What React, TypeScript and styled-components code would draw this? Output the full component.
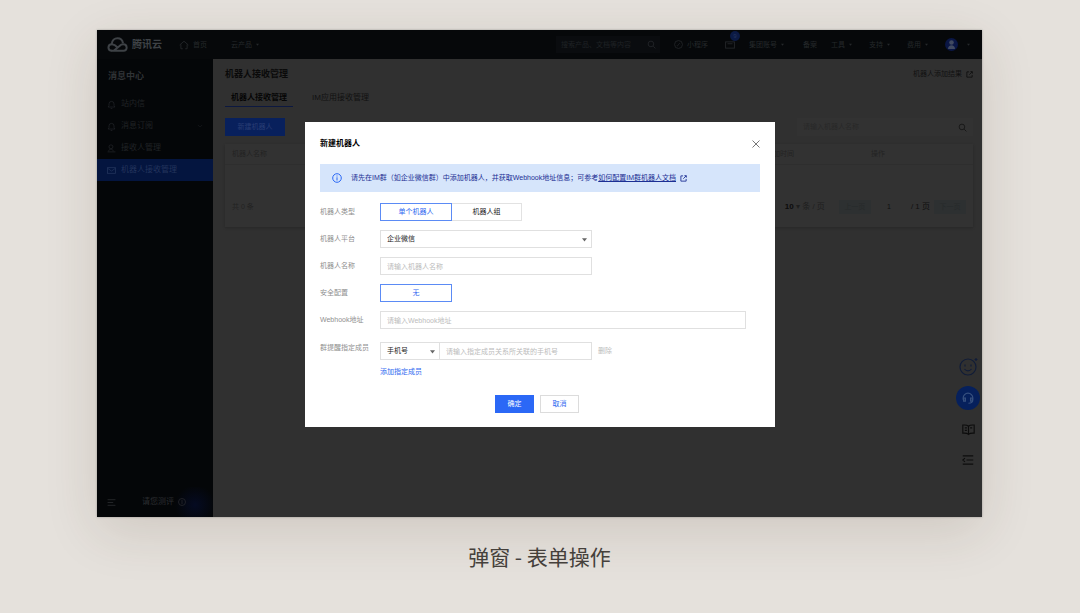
import React from 'react';
import styled, { createGlobalStyle } from 'styled-components';

const GlobalStyle = createGlobalStyle`
  *, *::before, *::after { box-sizing: border-box; }
  body {
    margin: 0;
    min-height: 100vh;
    background: #e5e1dc;
    font-family: "Liberation Sans", "Noto Sans CJK SC", sans-serif;
    font-size: 7px;
    line-height: 12px;
    overflow-x: hidden;
  }
  button, input, select { font: inherit; margin: 0; border-radius: 0; }
  button { cursor: pointer; }
  a { text-decoration: none; }
  svg { display: block; flex: none; }
`;

const Figure = styled.figure`
  margin: 0;
  padding: 30px 98px 40px 97px;
`;

const Caption = styled.figcaption`
  margin-top: 22px;
  text-align: center;
  font-family: "Noto Sans CJK SC", sans-serif;
  font-size: 21px;
  line-height: 34px;
  color: #46423d;
`;

const Frame = styled.div`
  position: relative;
  display: flex;
  flex-direction: column;
  min-height: 487px;
  background: #303030;
  box-shadow: 0 14px 50px rgba(70, 50, 30, 0.14), 0 0 2px rgba(0, 0, 0, 0.3);
`;

/* ---------- top bar ---------- */

const TopBar = styled.header`
  display: flex;
  align-items: center;
  height: 29px;
  padding: 0 12px 0 10px;
  background: #06080a;
  color: #25282b;
`;

const Brand = styled.a`
  display: flex;
  align-items: center;
  gap: 4px;
  width: 72px;
  font-size: 10px;
  font-weight: 700;
  color: #3e4246;
`;

const NavLink = styled.a<{ $width?: number }>`
  position: relative;
  display: flex;
  align-items: center;
  gap: 4px;
  width: ${(p) => (p.$width ? `${p.$width}px` : 'auto')};
  color: inherit;
`;

const SearchBox = styled.label`
  display: flex;
  align-items: center;
  width: 104px;
  height: 17px;
  margin-left: auto;
  margin-right: 14px;
  padding: 0 4px 0 5px;
  background: #0a0c0f;
`;

const BareInput = styled.input`
  flex: 1;
  min-width: 0;
  padding: 0;
  border: 0;
  outline: 0;
  background: transparent;
  color: inherit;
  &::placeholder { color: #1f2225; opacity: 1; }
`;

const CountBadge = styled.span`
  position: absolute;
  left: 5px;
  top: -9px;
  width: 10px;
  height: 10px;
  border-radius: 5px;
  background: #0b1a45;
  color: #25345c;
  font-size: 6px;
  line-height: 10px;
  text-align: center;
`;

const Avatar = styled.span`
  display: flex;
  align-items: center;
  justify-content: center;
  width: 13px;
  height: 13px;
  border-radius: 50%;
  background: #0a1645;
  color: #414a60;
`;

/* ---------- side bar ---------- */

const Body = styled.div`
  flex: 1;
  display: flex;
`;

const SideBar = styled.aside`
  display: flex;
  flex-direction: column;
  width: 116px;
  background: #040608;
  color: #232629;
  overflow: hidden;
`;

const SideTitle = styled.h2`
  margin: 0;
  padding: 10px 11px;
  font-size: 9px;
  line-height: 14px;
  font-weight: 700;
  color: #303336;
`;

const SideItem = styled.a<{ $active?: boolean }>`
  display: flex;
  align-items: center;
  gap: 5px;
  height: 22px;
  padding: 0 10px;
  font-size: 8px;
  color: ${(p) => (p.$active ? '#23345c' : '#202326')};
  background: ${(p) => (p.$active ? '#04153f' : 'transparent')};
`;

const Grow = styled.span`
  flex: 1;
`;

const SideFooter = styled.div`
  display: flex;
  align-items: center;
  height: 30px;
  margin-top: auto;
  padding: 0 10px;
  font-size: 8px;
  color: #2b2d30;
  background: radial-gradient(circle at 98px 18px, #050b22, #040608 20px);
`;

const FooterText = styled.a`
  display: flex;
  align-items: center;
  gap: 4px;
  margin-left: 26px;
  color: inherit;
`;

/* ---------- main area ---------- */

const Main = styled.main`
  flex: 1;
  min-width: 0;
  padding: 8px 9px 0 12px;
  color: #121212;
`;

const TitleRow = styled.div`
  display: flex;
  align-items: center;
  justify-content: space-between;
`;

const PageTitle = styled.h1`
  margin: 0;
  font-size: 9px;
  line-height: 14px;
  font-weight: 700;
  color: #0a0a0a;
`;

const DocLink = styled.a`
  display: flex;
  align-items: center;
  gap: 4px;
  color: #101010;
`;

const Tabs = styled.div`
  display: flex;
  gap: 13px;
  margin-top: 8px;
`;

const Tab = styled.button<{ $active?: boolean }>`
  height: 18px;
  padding: 0 6px;
  border: 0;
  border-bottom: 1px solid ${(p) => (p.$active ? '#0c1840' : 'transparent')};
  background: none;
  font-size: 8px;
  font-weight: ${(p) => (p.$active ? 700 : 400)};
  color: ${(p) => (p.$active ? '#060606' : '#101010')};
`;

const Toolbar = styled.div`
  display: flex;
  align-items: center;
  justify-content: space-between;
  margin-top: 11px;
`;

const CreateButton = styled.button`
  width: 60px;
  height: 18px;
  padding: 0;
  border: 0;
  background: #08205c;
  color: #283d74;
`;

const TableSearch = styled.label`
  display: flex;
  align-items: center;
  width: 176px;
  height: 18px;
  padding: 0 6px;
  background: #323232;
  & input::placeholder { color: #282828; }
`;

const Card = styled.section`
  margin-top: 8px;
  background: #323232;
  box-shadow: 0 1px 2px #282828;
  color: #222;
`;

const Table = styled.table`
  width: 100%;
  border-collapse: collapse;
  table-layout: fixed;
  & th {
    height: 20px;
    padding: 0 7px;
    text-align: left;
    font-weight: 400;
    border-bottom: 1px solid #2e2e2e;
  }
`;

const Pager = styled.div`
  display: flex;
  align-items: center;
  height: 40px;
  margin-top: 22px;
  padding: 0 7px;
  color: #222;
`;

const PageSize = styled.button`
  padding: 0;
  border: 0;
  margin-right: 14px;
  background: none;
  color: #1e1e1e;
  font-size: 8px;
  & b { color: #0c0c0c; }
`;

const PagerChip = styled.button`
  width: 32px;
  height: 14px;
  padding: 0;
  border: 0;
  background: #2d3031;
  color: #262a2b;
`;

const PageInput = styled.input`
  width: 36px;
  height: 14px;
  padding: 0;
  border: 0;
  background: transparent;
  color: #101010;
  text-align: center;
`;

const PageTotal = styled.span`
  margin: 0 4px;
  font-size: 8px;
  color: #101010;
`;

const FloatTools = styled.div`
  position: absolute;
  right: 2px;
  bottom: 45px;
  display: flex;
  flex-direction: column;
  align-items: center;
  width: 24px;
  gap: 7px;
`;

const FloatButton = styled.button<{ $round?: boolean }>`
  display: flex;
  align-items: center;
  justify-content: center;
  width: 24px;
  height: 24px;
  padding: 0;
  border: 0;
  border-radius: 12px;
  background: ${(p) => (p.$round ? '#06205c' : 'transparent')};
  color: ${(p) => (p.$round ? '#37507f' : '#0c0c0c')};
`;

/* ---------- dialog ---------- */

const DialogLayer = styled.div`
  position: absolute;
  inset: 0;
  display: flex;
  align-items: flex-start;
  justify-content: center;
  padding: 92px 0 0 1px;
`;

const Dialog = styled.div`
  width: 470px;
  padding: 14px 15px;
  background: #fff;
  color: #222;
`;

const DialogHead = styled.div`
  display: flex;
  align-items: center;
  justify-content: space-between;
  height: 16px;
`;

const DialogTitle = styled.h2`
  margin: 0;
  font-size: 8px;
  font-weight: 700;
  color: #000;
`;

const CloseButton = styled.button`
  padding: 0;
  border: 0;
  background: none;
  color: #777;
`;

const Notice = styled.div`
  display: flex;
  align-items: center;
  height: 28px;
  margin: 12px 0 11px;
  padding: 0 12px;
  background: #d6e5fb;
  color: #1c2f94;
  & p { margin: 0 0 0 9px; }
`;

const NoticeLink = styled.a`
  color: inherit;
  text-decoration: underline;
  text-underline-offset: 1px;
  margin-right: 4px;
`;

const FormRow = styled.div`
  display: flex;
  align-items: center;
  height: 18px;
  margin-bottom: 9px;
`;

const MemberRow = styled.div`
  display: flex;
  align-items: flex-start;
`;

const Label = styled.label<{ $top?: boolean }>`
  flex: none;
  width: 60px;
  padding-top: ${(p) => (p.$top ? 4 : 0)}px;
  white-space: nowrap;
  color: #8f8f8f;
`;

const Members = styled.div`
  display: flex;
  flex-direction: column;
  align-items: flex-start;
  padding-top: 4px;
`;

const MemberLine = styled.div`
  display: flex;
  align-items: center;
`;

const Choice = styled.button<{ $selected?: boolean }>`
  width: 72px;
  height: 18px;
  padding: 0;
  background: #fff;
  border: 1px solid ${(p) => (p.$selected ? '#5b8bf5' : '#e2e2e2')};
  color: ${(p) => (p.$selected ? '#2f68f0' : '#222')};
  & + & { width: 70px; border-left: 0; }
`;

const SelectWrap = styled.span<{ $width: number }>`
  position: relative;
  display: block;
  width: ${(p) => p.$width}px;
  color: #666;
  & svg {
    position: absolute;
    right: 5px;
    top: 7px;
    pointer-events: none;
  }
`;

const Select = styled.select`
  display: block;
  appearance: none;
  width: 100%;
  height: 18px;
  padding: 0 6px;
  border: 1px solid #e0e0e0;
  background: #fff;
  color: #1c1c1c;
`;

const TextInput = styled.input<{ $width: number; $joined?: boolean }>`
  width: ${(p) => p.$width}px;
  height: 18px;
  padding: 0 6px;
  border: 1px solid #e0e0e0;
  border-left-width: ${(p) => (p.$joined ? 0 : 1)}px;
  background: #fff;
  color: #222;
  &::placeholder { color: #bcbcbc; opacity: 1; }
`;

const TextButton = styled.button<{ $muted?: boolean }>`
  padding: 0;
  border: 0;
  background: none;
  color: ${(p) => (p.$muted ? '#bbb' : '#2f68f0')};
  margin: ${(p) => (p.$muted ? '0 0 0 6px' : '6px 0 0')};
`;

const Actions = styled.div`
  display: flex;
  justify-content: center;
  gap: 6px;
  margin-top: 17px;
  padding-right: 6px;
`;

const ActionButton = styled.button<{ $primary?: boolean }>`
  width: 39px;
  height: 18px;
  padding: 0;
  border: 1px solid ${(p) => (p.$primary ? '#2b68f6' : '#dcdcdc')};
  background: ${(p) => (p.$primary ? '#2b68f6' : '#fff')};
  color: ${(p) => (p.$primary ? '#fff' : '#2f68f0')};
`;

/* ---------- icons ---------- */

type IconProps = { size?: number; width?: number; children: React.ReactNode };

const Icon = ({ size = 9, width = 1.4, children }: IconProps) => (
  <svg width={size} height={size} viewBox="0 0 16 16" fill="none" stroke="currentColor" strokeWidth={width} aria-hidden="true">
    {children}
  </svg>
);

const Caret = ({ size = 4 }: { size?: number }) => (
  <svg width={size} height={size} viewBox="0 0 8 8" fill="currentColor" aria-hidden="true">
    <path d="M0 2h8L4 7z" />
  </svg>
);

const Cloud = () => (
  <svg width="21" height="15" viewBox="0 0 42 30" fill="none" stroke="currentColor" strokeWidth="4" aria-hidden="true">
    <path d="M9 27.500h24c9 0 8-13-0.500-13-3 0-5.500 1.500-7.500 3.500L14 27" />
    <path d="M21 21c-3-3.500-6.500-6.500-11-6.500-9.500 0-9.500 13 0 13" />
    <path d="M9.500 14C10 7 15 2.500 21 2.500c6 0 10 4 11 10" />
  </svg>
);

const SearchIcon = () => (
  <Icon><circle cx="7" cy="7" r="5" /><path d="M11 11l4 4" /></Icon>
);

const Bell = () => (
  <Icon><path d="M2 12.500h12l-1.500-2.500V7a4.500 4.500 0 0 0-9 0v3zM6.500 15h3" /></Icon>
);

const Mail = () => (
  <Icon><rect x="1" y="3" width="14" height="10" /><path d="M1 4l7 5 7-5" /></Icon>
);

const External = () => (
  <Icon size={7} width={2}><path d="M7 2H2v12h12V9M10 1.500h4.500V6M14 2L7.500 8.500" /></Icon>
);

const rightLinks = ['工具', '支持', '费用'];

export default function App() {
  return (
    <>
      <GlobalStyle />
      <Figure>
        <Frame>
          <TopBar>
            <Brand href="#"><Cloud />腾讯云</Brand>
            <NavLink href="#" $width={52}>
              <Icon size={10}><path d="M1 8l7-6 7 6M3 7v7h3M13 7v7h-3" /></Icon>首页
            </NavLink>
            <NavLink href="#">云产品 <Caret size={3} /></NavLink>
            <SearchBox>
              <BareInput type="search" aria-label="搜索" placeholder="搜索产品、文档等内容" />
              <SearchIcon />
            </SearchBox>
            <NavLink href="#" $width={51}>
              <Icon><circle cx="8" cy="8" r="7" /><path d="M5 10c3 2 3-6 6-3" /></Icon>小程序
            </NavLink>
            <NavLink href="#" $width={24}>
              <Icon size={10}><rect x="1" y="3" width="14" height="10" /><path d="M4 6h8" /></Icon>
              <CountBadge>9</CountBadge>
            </NavLink>
            <NavLink href="#" $width={54}>集团账号 <Caret size={3} /></NavLink>
            <NavLink href="#" $width={28}>备案</NavLink>
            {rightLinks.map((t) => (
              <NavLink href="#" key={t} $width={38}>{t} <Caret size={3} /></NavLink>
            ))}
            <Avatar>
              <svg width="9" height="9" viewBox="0 0 9 9" fill="currentColor" aria-hidden="true">
                <circle cx="4.500" cy="2.500" r="2.300" /><path d="M1 9c0-5 7-5 7 0z" />
              </svg>
            </Avatar>
            <NavLink href="#" aria-label="账号" $width={12}><Grow /><Caret size={3} /></NavLink>
          </TopBar>
          <Body>
            <SideBar>
              <SideTitle>消息中心</SideTitle>
              <SideItem href="#"><Bell />站内信</SideItem>
              <SideItem href="#">
                <Bell />消息订阅<Grow />
                <Icon size={6}><path d="M2 5l6 6 6-6" /></Icon>
              </SideItem>
              <SideItem href="#">
                <Icon><circle cx="7" cy="5" r="3.500" /><path d="M1 14h14M3 13c0-5 8-5 8 0" /></Icon>接收人管理
              </SideItem>
              <SideItem href="#" $active><Mail />机器人接收管理</SideItem>
              <SideFooter>
                <Icon><path d="M1 3h14M1 8h10M1 13h14" /></Icon>
                <FooterText href="#">请您测评 <Icon size={8}><circle cx="8" cy="8" r="7" /><path d="M8 4v8" /></Icon></FooterText>
              </SideFooter>
            </SideBar>
            <Main>
              <TitleRow>
                <PageTitle>机器人接收管理</PageTitle>
                <DocLink href="#">机器人添加结果 <External /></DocLink>
              </TitleRow>
              <Tabs role="tablist">
                <Tab role="tab" aria-selected="true" $active>机器人接收管理</Tab>
                <Tab role="tab" aria-selected="false">IM应用接收管理</Tab>
              </Tabs>
              <Toolbar>
                <CreateButton>新建机器人</CreateButton>
                <TableSearch>
                  <BareInput type="search" aria-label="搜索机器人" placeholder="请输入机器人名称" />
                  <SearchIcon />
                </TableSearch>
              </Toolbar>
              <Card>
                <Table>
                  <colgroup><col /><col width="105" /><col width="109" /></colgroup>
                  <thead>
                    <tr><th>机器人名称</th><th>添加时间</th><th>操作</th></tr>
                  </thead>
                </Table>
                <Pager>
                  <span>共 0 条</span>
                  <Grow />
                  <PageSize><b>10</b> ▾ 条 / 页</PageSize>
                  <PagerChip>上一页</PagerChip>
                  <PageInput aria-label="页码" defaultValue="1" />
                  <PageTotal>/ 1 页</PageTotal>
                  <PagerChip>下一页</PagerChip>
                </Pager>
              </Card>
            </Main>
          </Body>

          <FloatTools>
            <FloatButton aria-label="评价">
              <svg width="20" height="20" viewBox="0 0 20 20" fill="none" stroke="#101c38" strokeWidth="1.200" aria-hidden="true">
                <circle cx="10" cy="10" r="8" /><path d="M7 7.500v2M13 7.500v2M6.500 12c2 2.500 5 2.500 7 0" /><path d="M18 1v3M16.500 2.500h3" />
              </svg>
            </FloatButton>
            <FloatButton aria-label="客服" $round>
              <Icon size={14}><path d="M2.500 10V8a5.500 5.500 0 0 1 11 0v2c0 3-2 4-5 4" /><path d="M3 8v3.500h2V8zM11 8v3.500h2V8z" /></Icon>
            </FloatButton>
            <FloatButton aria-label="文档">
              <Icon size={13}><path d="M8 4C6 2 3 2.500 1 2.500v10c2 0 5-.5 7 1.500 2-2 5-1.500 7-1.500v-10c-2 0-5-.5-7 1.500zM8 4v10M3.500 6H6M3.500 9H6M10 6h2.500" /></Icon>
            </FloatButton>
            <FloatButton aria-label="目录">
              <Icon size={12}><path d="M1 2.500h14M6 8h9M1 13.500h14M4 5.500L1 8l3 2.500" /></Icon>
            </FloatButton>
          </FloatTools>

          <DialogLayer>
            <Dialog role="dialog" aria-modal="true" aria-labelledby="dialog-title">
              <DialogHead>
                <DialogTitle id="dialog-title">新建机器人</DialogTitle>
                <CloseButton aria-label="关闭">
                  <Icon size={8} width={2}><path d="M1 1l14 14M15 1L1 15" /></Icon>
                </CloseButton>
              </DialogHead>
              <Notice>
                <svg width="10" height="10" viewBox="0 0 10 10" fill="none" stroke="#2b68f6" aria-hidden="true">
                  <circle cx="5" cy="5" r="4.300" /><path d="M5 4.300v3.200M5 2.500v1" />
                </svg>
                <p>
                  请先在IM群（如企业微信群）中添加机器人，并获取Webhook地址信息；可参考<NoticeLink href="#">如何配置IM群机器人文档</NoticeLink>
                </p>
                <External />
              </Notice>
              <FormRow>
                <Label as="span" id="robot-type">机器人类型</Label>
                <Choice aria-describedby="robot-type" $selected>单个机器人</Choice>
                <Choice aria-describedby="robot-type">机器人组</Choice>
              </FormRow>
              <FormRow>
                <Label htmlFor="platform">机器人平台</Label>
                <SelectWrap $width={212}>
                  <Select id="platform"><option>企业微信</option></Select>
                  <Caret size={5} />
                </SelectWrap>
              </FormRow>
              <FormRow>
                <Label htmlFor="name">机器人名称</Label>
                <TextInput id="name" $width={212} placeholder="请输入机器人名称" />
              </FormRow>
              <FormRow>
                <Label as="span" id="security">安全配置</Label>
                <Choice aria-describedby="security" $selected>无</Choice>
              </FormRow>
              <FormRow>
                <Label htmlFor="webhook">Webhook地址</Label>
                <TextInput id="webhook" $width={366} placeholder="请输入Webhook地址" />
              </FormRow>
              <MemberRow>
                <Label htmlFor="member" $top>群提醒指定成员</Label>
                <Members>
                  <MemberLine>
                    <SelectWrap $width={60}>
                      <Select aria-label="成员类型"><option>手机号</option></Select>
                      <Caret size={5} />
                    </SelectWrap>
                    <TextInput id="member" $width={152} $joined placeholder="请输入指定成员关系所关联的手机号" />
                    <TextButton $muted>删除</TextButton>
                  </MemberLine>
                  <TextButton>添加指定成员</TextButton>
                </Members>
              </MemberRow>
              <Actions>
                <ActionButton $primary>确定</ActionButton>
                <ActionButton>取消</ActionButton>
              </Actions>
            </Dialog>
          </DialogLayer>
        </Frame>
        <Caption>弹窗 - 表单操作</Caption>
      </Figure>
    </>
  );
}
